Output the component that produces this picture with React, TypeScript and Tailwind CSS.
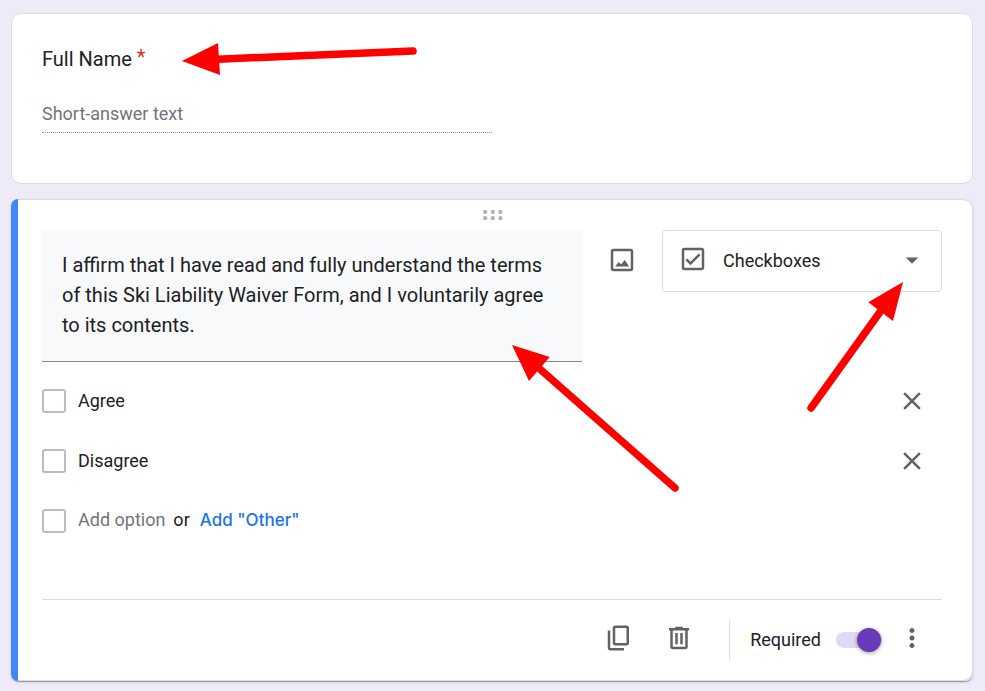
import React, { useState } from 'react';

const ICONS = {
  image:
    'M19 5v14H5V5h14m0-2H5c-1.1 0-2 .9-2 2v14c0 1.1.9 2 2 2h14c1.1 0 2-.9 2-2V5c0-1.1-.9-2-2-2zM14.2 11.9l-2.9 3.5-1.9-1.8L6.5 17.200h11.200l-3.500-5.300z',
  checkbox:
    'M19 3H5c-1.1 0-2 .9-2 2v14c0 1.1.9 2 2 2h14c1.1 0 2-.9 2-2V5c0-1.1-.9-2-2-2zm0 16H5V5h14v14zM17.99 9l-1.41-1.42-6.59 6.59-2.58-2.57-1.42 1.41 4 3.99z',
  dropdown: 'M7 10l5 5 5-5z',
  close:
    'M19 6.41L17.59 5 12 10.59 6.41 5 5 6.41 10.59 12 5 17.59 6.41 19 12 13.41 17.59 19 19 17.59 13.41 12z',
  copy:
    'M18 2H9c-1.1 0-2 .9-2 2v12c0 1.1.9 2 2 2h9c1.1 0 2-.9 2-2V4c0-1.1-.9-2-2-2zm0 14H9V4h9v12zM3 6v14c0 1.1.9 2 2 2h11v-2H5V6H3z',
  trash:
    'M15 4V3H9v1H4v2h1v13c0 1.1.9 2 2 2h10c1.1 0 2-.9 2-2V6h1V4h-5zm2 15H7V6h10v13zM9 8h2v9H9zM13 8h2v9h-2z',
  more:
    'M12 8c1.1 0 2-.9 2-2s-.9-2-2-2-2 .9-2 2 .9 2 2 2zm0 2c-1.1 0-2 .9-2 2s.9 2 2 2 2-.9 2-2-.9-2-2-2zm0 6c-1.1 0-2 .9-2 2s.9 2 2 2 2-.9 2-2-.9-2-2-2z',
};

function Icon({ name, className = '' }: { name: keyof typeof ICONS; className?: string }) {
  return (
    <svg viewBox="0 0 24 24" className={`size-[30px] fill-[#5f6368] ${className}`} aria-hidden="true">
      <path d={ICONS[name]} />
    </svg>
  );
}

function IconButton({ name, label }: { name: keyof typeof ICONS; label: string }) {
  return (
    <button type="button" aria-label={label} className="flex size-[60px] shrink-0 items-center justify-center">
      <Icon name={name} />
    </button>
  );
}

const checkboxStyle = 'size-6 shrink-0 appearance-none rounded-[3px] border-2 border-[#bdbdbd] bg-white';

function OptionRow({ text }: { text: string }) {
  return (
    <li className="flex h-[60px] justify-between">
      <label className="flex items-center gap-3">
        <input type="checkbox" className={checkboxStyle} />
        {text}
      </label>
      <IconButton name="close" label={`Remove ${text}`} />
    </li>
  );
}

function ShortAnswerCard() {
  return (
    <section className="rounded-[10px] border border-[#dadce0] bg-white px-[30px] pt-[30px] pb-[50px]">
      <label htmlFor="full-name" className="flex gap-[5px] text-xl leading-[30px]">
        Full Name
        <span className="leading-[26px] text-[#d93025]">*</span>
      </label>
      <input
        id="full-name"
        placeholder="Short-answer text"
        className="mt-6 block h-[35px] w-1/2 border-b border-dotted border-[#8e8e8e] pb-1 placeholder:text-[#70757a]"
      />
    </section>
  );
}

function CheckboxCard() {
  const [question, setQuestion] = useState(
    'I affirm that I have read and fully understand the terms of this Ski Liability Waiver Form, and I voluntarily agree to its contents.'
  );
  const [required, setRequired] = useState(true);

  return (
    <section className="flex rounded-lg shadow-[0_2px_1px_-1px_rgba(0,0,0,0.2),0_1px_1px_0_rgba(0,0,0,0.14),0_1px_3px_0_rgba(0,0,0,0.12)]">
      <div className="w-[7px] shrink-0 rounded-l-lg bg-[#4285f4]" />
      <div className="min-w-0 flex-1 rounded-r-[10px] border-y border-r border-[#dadce0] bg-white pr-[30px] pl-6">
        <button type="button" aria-label="Move question" className="mx-auto flex h-[30px] items-center justify-center">
          <svg width="22" height="10" viewBox="0 0 22 10" className="fill-[#b0b0b0]" aria-hidden="true">
            {[4.2, 11.8, 19.4].map((x) => (
              <g key={x}>
                <circle cx={x} cy="1.9" r="2.1" />
                <circle cx={x} cy="8.1" r="2.1" />
              </g>
            ))}
          </svg>
        </button>

        <div className="flex items-start">
          <textarea
            aria-label="Question"
            rows={3}
            value={question}
            onChange={(e) => setQuestion(e.target.value)}
            className="block w-3/5 resize-none overflow-hidden border-b border-[#80868b] bg-[#f8f9fa] px-5 pt-5 pb-[21px] text-xl leading-[30px]"
          />
          <div className="flex flex-1 justify-center">
            <IconButton name="image" label="Add image" />
          </div>
          <div className="relative w-[280px]">
            <select
              aria-label="Question type"
              className="h-[62px] w-full appearance-none rounded border border-[#dadce0] bg-white pl-[60px]"
            >
              <option>Checkboxes</option>
            </select>
            <Icon name="checkbox" className="pointer-events-none absolute top-[14px] left-4" />
            <Icon name="dropdown" className="pointer-events-none absolute top-[15px] right-[15px]" />
          </div>
        </div>

        <ul className="mt-[9px]">
          <OptionRow text="Agree" />
          <OptionRow text="Disagree" />
          <li className="flex h-[60px] items-center gap-3">
            <input type="checkbox" aria-label="New option" className={checkboxStyle} />
            <div className="flex items-baseline pb-[2px]">
              <button type="button" className="text-[#70757a]">
                Add option
              </button>
              <span className="ml-2">or</span>
              <button type="button" className="ml-[10px] font-[Inter,sans-serif] text-[17px] font-medium text-[#1a73e8]">
                Add "Other"
              </button>
            </div>
          </li>
        </ul>

        <footer className="mt-12 flex items-start justify-end border-t border-[#dadce0] py-2">
          <IconButton name="copy" label="Duplicate" />
          <IconButton name="trash" label="Delete" />
          <div className="ml-5 flex h-16 items-center">
            <div className="h-10 border-l border-[#dadce0]" />
            <label className="flex items-center gap-[15px] pl-5">
              Required
              <input
                type="checkbox"
                role="switch"
                checked={required}
                onChange={(e) => setRequired(e.target.checked)}
                className="relative h-4 w-[46px] appearance-none rounded-full bg-[#e1d8f1] before:absolute before:-top-1 before:left-0 before:size-6 before:rounded-full before:bg-[#673ab7] before:shadow-[0_1px_4px_rgba(0,0,0,0.4)] checked:before:left-[21px]"
              />
            </label>
          </div>
          <IconButton name="more" label="More options" />
        </footer>
      </div>
    </section>
  );
}

// Red callouts drawn over the form
function Annotations() {
  return (
    <svg
      width="985"
      height="691"
      viewBox="0 0 985 691"
      className="pointer-events-none absolute top-0 left-0 fill-[#ff0000] stroke-[#ff0000]"
      aria-hidden="true"
    >
      <g strokeWidth="7.5" strokeLinecap="round">
        <path d="M218 59.2L413 51" />
        <path d="M541 370L675 488" />
        <path d="M880 312L811 408" />
      </g>
      <g stroke="none">
        <path d="M182 61L218 43l2 32z" />
        <path d="M512 345l37.700 12L529 381z" />
        <path d="M903 282l-34.700 20.300L893 321z" />
      </g>
    </svg>
  );
}

export default function App() {
  return (
    <main className="relative flex min-h-screen flex-col gap-[15px] bg-[#eeeaf7] pt-[13px] pr-3 pb-[9px] pl-[11px] font-[Roboto,sans-serif] text-lg leading-6 text-[#202124]">
      <ShortAnswerCard />
      <CheckboxCard />
      <Annotations />
    </main>
  );
}
